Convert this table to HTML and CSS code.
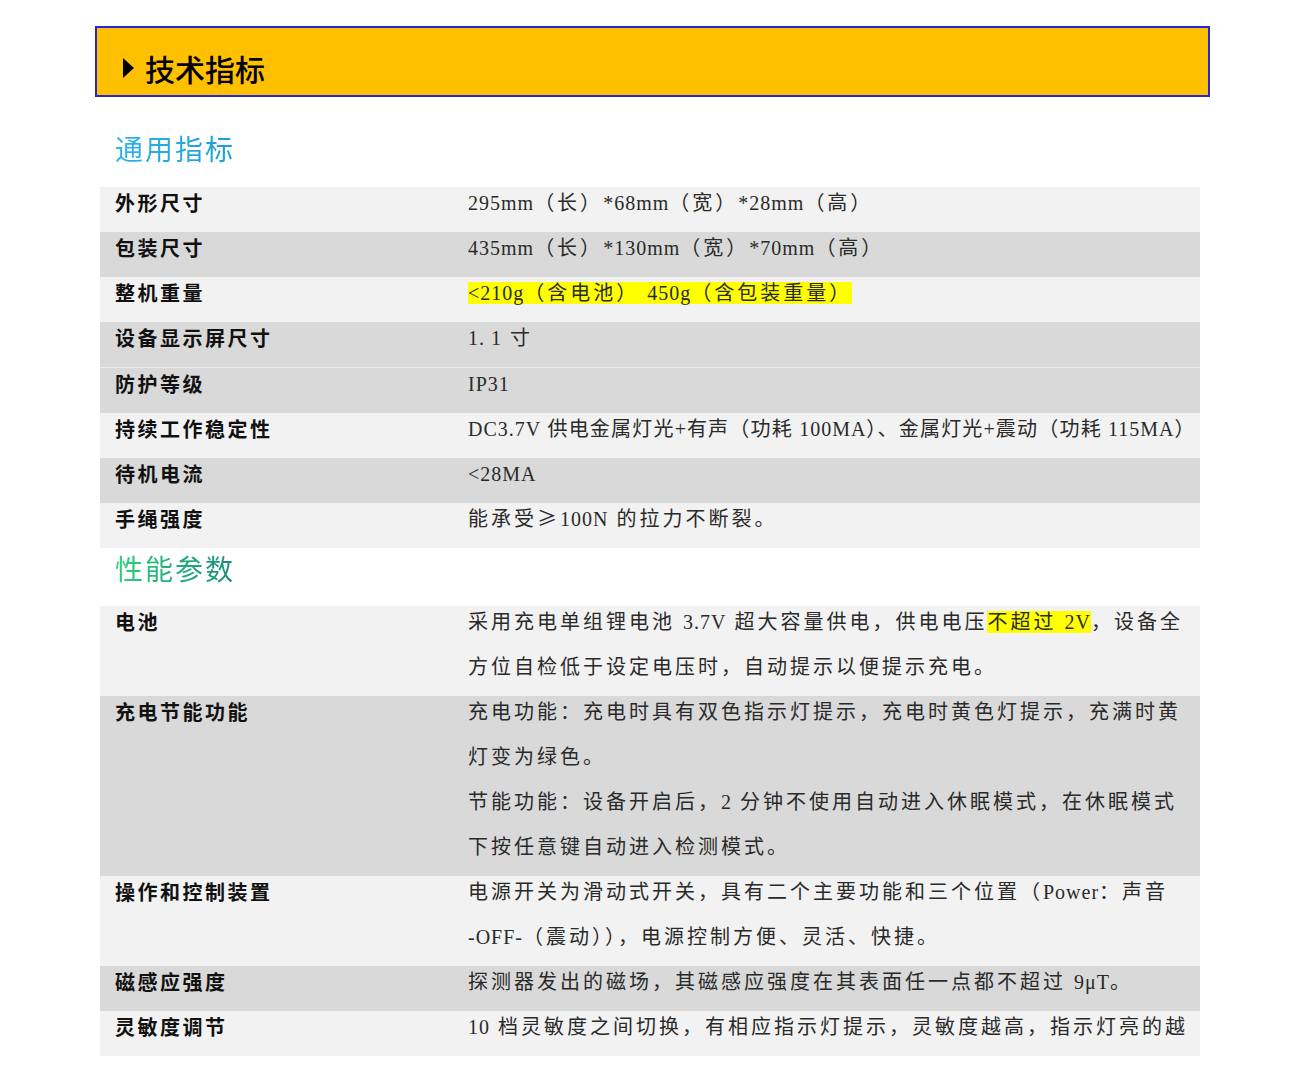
FILE: index.html
```
<!DOCTYPE html>
<html lang="zh-CN">
<head>
<meta charset="utf-8">
<title>技术指标</title>
<link rel="stylesheet" href="styles.css">
</head>
<body>
<div class="page">
  <div class="banner">
    <svg class="arrow" width="11" height="20" viewBox="0 0 11 20"><polygon points="0,0 11,10 0,20" fill="#000"/></svg>
    <span class="banner-text">技术指标</span>
  </div>

  <h2 class="sec-title blue">通用指标</h2>
  <div class="spec">
    <div class="row light"><div class="label">外形尺寸</div><div class="value"><span class="n">295mm</span>（长）<span class="n">*68mm</span>（宽）<span class="n">*28mm</span>（高）</div></div>
    <div class="row dark"><div class="label">包装尺寸</div><div class="value"><span class="n">435mm</span>（长）<span class="n">*130mm</span>（宽）<span class="n">*70mm</span>（高）</div></div>
    <div class="row light"><div class="label">整机重量</div><div class="value"><span class="hl"><span class="n">&lt;210g</span>（含电池） <span class="n">450g</span>（含包装重量）</span></div></div>
    <div class="row dark"><div class="label">设备显示屏尺寸</div><div class="value"><span class="n">1. 1</span> 寸</div></div>
    <div class="row dark sep"><div class="label">防护等级</div><div class="value"><span class="n">IP31</span></div></div>
    <div class="row light"><div class="label">持续工作稳定性</div><div class="value tight"><span class="n">DC3.7V</span> 供电金属灯光<span class="n">+</span>有声（功耗 <span class="n">100MA</span>）、金属灯光<span class="n">+</span>震动（功耗 <span class="n">115MA</span>）</div></div>
    <div class="row dark"><div class="label">待机电流</div><div class="value"><span class="n">&lt;28MA</span></div></div>
    <div class="row light"><div class="label">手绳强度</div><div class="value">能承受<span class="c">≥</span><span class="n">100N</span> 的拉力不断裂。</div></div>
  </div>

  <h2 class="sec-title green">性能参数</h2>
  <div class="spec">
    <div class="row light"><div class="label">电池</div><div class="value">采用充电单组锂电池 <span class="n">3.7V</span> 超大容量供电，供电电压<span class="hl">不超过 <span class="n">2V</span></span>，设备全<br>方位自检低于设定电压时，自动提示以便提示充电。</div></div>
    <div class="row dark"><div class="label">充电节能功能</div><div class="value">充电功能：充电时具有双色指示灯提示，充电时黄色灯提示，充满时黄<br>灯变为绿色。<br>节能功能：设备开启后，<span class="n">2</span> 分钟不使用自动进入休眠模式，在休眠模式<br>下按任意键自动进入检测模式。</div></div>
    <div class="row light"><div class="label">操作和控制装置</div><div class="value">电源开关为滑动式开关，具有二个主要功能和三个位置（<span class="n">Power</span>：声音<br><span class="n">-OFF-</span>（震动）），电源控制方便、灵活、快捷。</div></div>
    <div class="row dark"><div class="label">磁感应强度</div><div class="value">探测器发出的磁场，其磁感应强度在其表面任一点都不超过 <span class="n">9μT</span>。</div></div>
    <div class="row light"><div class="label">灵敏度调节</div><div class="value"><span class="n">10</span> 档灵敏度之间切换，有相应指示灯提示，灵敏度越高，指示灯亮的越</div></div>
  </div>
</div>
</body>
</html>
```
FILE: styles.css
```
html, body {
  margin: 0;
  padding: 0;
  background: #ffffff;
}
.page {
  width: 1115px;
  margin-left: 95px;
  padding-top: 26px;
  font-family: "Liberation Serif", "Noto Sans CJK SC", serif;
}
.banner {
  box-sizing: border-box;
  height: 71px;
  border: 2px solid #2626d6;
  background: #ffc000;
  display: flex;
  align-items: center;
  padding: 12px 0 0 26px;
}
.arrow {
  display: block;
  margin-right: 11px;
}
.banner-text {
  font-family: "Noto Sans CJK SC", sans-serif;
  font-weight: 500;
  font-size: 30px;
  line-height: 40px;
  color: #000;
}
.sec-title {
  margin: 31px 0 19px 20px;
  font-family: "Noto Sans CJK SC", sans-serif;
  font-weight: 400;
  font-size: 28px;
  line-height: 40px;
  letter-spacing: 2px;
  display: inline-block;
  -webkit-background-clip: text;
  background-clip: text;
  color: transparent;
}
.sec-title.blue {
  background-image: linear-gradient(90deg, #2db4ea, #1a9fd6);
}
.sec-title.green {
  margin-top: 0;
  margin-bottom: 18px;
  background-image: linear-gradient(90deg, #2fd27c, #178a7a);
}
.spec {
  width: 1100px;
  margin-left: 5px;
  display: flex;
  flex-direction: column;
}
.row {
  display: flex;
  overflow: hidden;
  box-sizing: border-box;
}
.row.light { background: #f2f2f2; }
.row.dark { background: #d9d9d9; }
.row.sep { border-top: 1px solid #ececec; }
.label, .value {
  line-height: 45px;
  font-size: 20px;
  white-space: nowrap;
}
.label {
  flex: 0 0 368px;
  box-sizing: border-box;
  padding-left: 15px;
  margin: -7px 0 7px;
  font-family: "Noto Sans CJK SC", sans-serif;
  font-weight: 700;
  letter-spacing: 2.5px;
  color: #111;
}
.value {
  flex: 1 1 auto;
  min-width: 0;
  margin: -6px 0 6px;
  color: #2a2a2a;
  letter-spacing: 3px;
}
.value.tight {
  letter-spacing: 1.2px;
}
.n {
  letter-spacing: 1px;
}
.c {
  font-family: "Noto Sans CJK SC", sans-serif;
  line-height: 1;
}
.hl {
  background: #ffff00;
}
```
